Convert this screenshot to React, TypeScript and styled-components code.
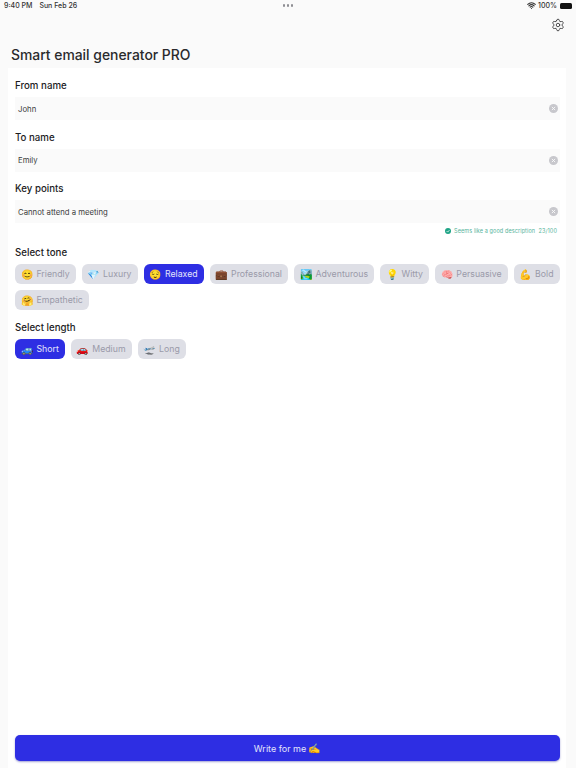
import styled, { createGlobalStyle } from "styled-components"
import { Settings, Wifi } from "lucide-react"

const GlobalStyle = createGlobalStyle`
  html, body {
    margin: 0;
    padding: 0;
    background: #fafafa;
  }
  * {
    box-sizing: border-box;
  }
`

const Page = styled.div`
  width: 576px;
  height: 768px;
  display: flex;
  flex-direction: column;
  overflow: hidden;
  background: #fafafa;
  color: #1c1c1e;
  font-family: Inter, "Liberation Sans", sans-serif;
`

const StatusBar = styled.div`
  height: 11px;
  padding: 0 4px;
  display: grid;
  grid-template-columns: 1fr auto 1fr;
  align-items: center;
  font-size: 7px;
  line-height: 11px;
  font-weight: 500;
  color: #333;
`

const StatusLeft = styled.div`
  display: flex;
  gap: 7px;
`

const Dots = styled.div`
  display: flex;
  gap: 1.5px;

  & span {
    width: 2.5px;
    height: 2.5px;
    border-radius: 50%;
    background: #8e8e93;
  }
`

const StatusRight = styled.div`
  display: flex;
  justify-content: flex-end;
  align-items: center;
  gap: 2px;
`

const Battery = styled.div`
  width: 12px;
  height: 6px;
  margin-left: 1px;
  border-radius: 1.5px;
  background: #111;
`

const GearRow = styled.div`
  height: 25px;
  padding: 7px 11px 0 0;
  display: flex;
  justify-content: flex-end;
  color: #3a3a3c;
`

const Title = styled.h1`
  margin: 0;
  padding: 5px 0 0 11px;
  height: 32px;
  font-size: 13.9px;
  line-height: 28px;
  font-weight: 500;
  color: #2a2a2c;
`

const Card = styled.div`
  flex: 1;
  margin: 0 10px 0 8px;
  padding: 10px 6px 7px 7px;
  display: flex;
  flex-direction: column;
  background: #fff;
`

const Field = styled.div`
  margin-bottom: 9.5px;
`

const Label = styled.div`
  font-size: 9.7px;
  line-height: 16px;
  font-weight: 500;
  color: #1c1c1e;
  margin-bottom: 3px;
`

const InputBox = styled.div`
  height: 23px;
  padding: 0 2px 0 3px;
  display: flex;
  align-items: center;
  justify-content: space-between;
  background: #fafafa;
  font-size: 7.75px;
  color: #3a3a3c;
`

const ClearIcon = styled.svg`
  width: 9px;
  height: 9px;
`

const Hint = styled.div`
  margin: -7.5px 3px 8px 0;
  height: 12px;
  display: flex;
  justify-content: flex-end;
  align-items: center;
  gap: 3px;
  font-size: 5.5px;
  letter-spacing: 0.1px;
  color: #55b39b;
`

const ChipGroup = styled.div`
  display: flex;
  flex-wrap: wrap;
  gap: 6px;
  margin: 0 -4px 10px 0;
`

const Chip = styled.div<{ $active?: boolean }>`
  height: 20px;
  padding: 0 6px;
  display: flex;
  align-items: center;
  gap: 3px;
  border-radius: 6px;
  font-size: 8.75px;
  white-space: nowrap;
  background: ${(p) => (p.$active ? "#2e2ee3" : "#dedfe6")};
  color: ${(p) => (p.$active ? "#e4e4fb" : "#9a9aa9")};
`

const Emoji = styled.span`
  font-size: 10px;
  font-family: "Noto Color Emoji", "Apple Color Emoji", sans-serif;
`

const WriteButton = styled.button`
  margin: auto 0 0 0;
  height: 26px;
  border: none;
  border-radius: 5px;
  background: #2e2ee3;
  box-shadow: 0 1px 2px rgba(46, 46, 160, 0.45);
  color: #e4e4fb;
  font-family: inherit;
  font-size: 9px;
`

const tones = [
  { emoji: "😊", name: "Friendly" },
  { emoji: "💎", name: "Luxury" },
  { emoji: "😌", name: "Relaxed", active: true },
  { emoji: "💼", name: "Professional" },
  { emoji: "🏞️", name: "Adventurous" },
  { emoji: "💡", name: "Witty" },
  { emoji: "🧠", name: "Persuasive" },
  { emoji: "💪", name: "Bold" },
  { emoji: "🤗", name: "Empathetic" },
]

const lengths = [
  { emoji: "🚙", name: "Short", active: true },
  { emoji: "🚗", name: "Medium" },
  { emoji: "🛫", name: "Long" },
]

const InputField = (props: { label: string; value: string }) => {
  return (
    <Field>
      <Label>{props.label}</Label>
      <InputBox>
        {props.value}
        <ClearIcon viewBox="0 0 10 10">
          <circle cx="5" cy="5" r="5" fill="#c7c7cc" />
          <path d="M3.2 3.2l3.6 3.6M6.8 3.2l-3.6 3.6" stroke="#fafafa" strokeWidth="1" />
        </ClearIcon>
      </InputBox>
    </Field>
  )
}

export default function App() {
  return (
    <Page>
      <GlobalStyle />
      <StatusBar>
        <StatusLeft>
          <span>9:40 PM</span>
          <span>Sun Feb 26</span>
        </StatusLeft>
        <Dots>
          <span />
          <span />
          <span />
        </Dots>
        <StatusRight>
          <Wifi size={9} strokeWidth={3} />
          <span>100%</span>
          <Battery />
        </StatusRight>
      </StatusBar>
      <GearRow>
        <Settings size={14} strokeWidth={1.5} />
      </GearRow>
      <Title>Smart email generator PRO</Title>
      <Card>
        <InputField label="From name" value="John" />
        <InputField label="To name" value="Emily" />
        <InputField label="Key points" value="Cannot attend a meeting" />
        <Hint>
          <svg width="6" height="6" viewBox="0 0 10 10">
            <circle cx="5" cy="5" r="5" fill="#1fa486" />
            <path d="M2.8 5.2l1.6 1.6 3-3.2" stroke="#fff" strokeWidth="1.3" fill="none" />
          </svg>
          Seems like a good description&nbsp;&nbsp;23/100
        </Hint>
        <Label>Select tone</Label>
        <ChipGroup>
          {tones.map((t) => (
            <Chip key={t.name} $active={t.active}>
              <Emoji>{t.emoji}</Emoji>
              {t.name}
            </Chip>
          ))}
        </ChipGroup>
        <Label>Select length</Label>
        <ChipGroup>
          {lengths.map((t) => (
            <Chip key={t.name} $active={t.active}>
              <Emoji>{t.emoji}</Emoji>
              {t.name}
            </Chip>
          ))}
        </ChipGroup>
        <WriteButton>
          Write for me <Emoji>✍️</Emoji>
        </WriteButton>
      </Card>
    </Page>
  )
}
